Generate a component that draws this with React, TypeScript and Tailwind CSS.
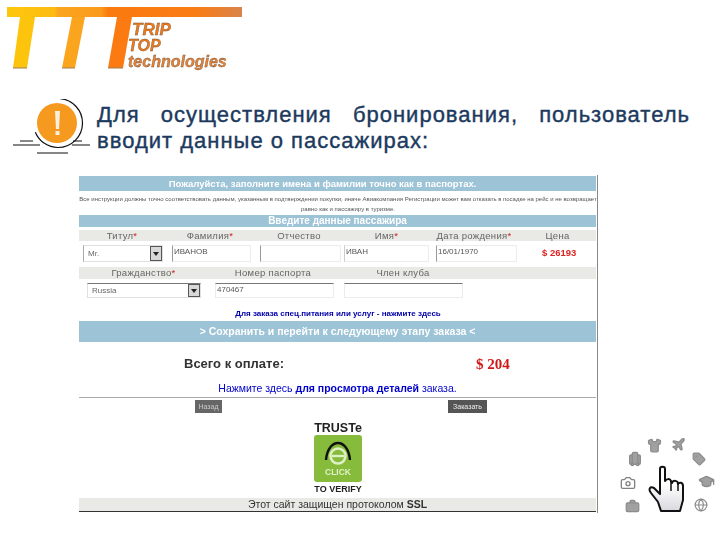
import { Briefcase, Camera, Globe, GraduationCap, Plane, Shirt, Tag, Luggage } from 'lucide-react'

const sans = 'font-["Liberation_Sans",Arial,sans-serif]'

function Logo() {
    return (
        <svg width="250" height="72" viewBox="0 0 250 72" className="block">
            <defs>
                <linearGradient id="bar" x1="0" x2="1" y1="0" y2="0">
                    <stop offset="0" stopColor="#fdc70c" />
                    <stop offset="0.2" stopColor="#fdbb12" />
                    <stop offset="0.22" stopColor="#fba51e" />
                    <stop offset="0.4" stopColor="#fb9a1c" />
                    <stop offset="0.43" stopColor="#fb7a10" />
                    <stop offset="0.8" stopColor="#f97c14" />
                    <stop offset="1" stopColor="#d9834a" />
                </linearGradient>
            </defs>
            <path d="M7 7H242V17H7Z" fill="url(#bar)" />
            <path d="M20 17H35L27 68H13Z" fill="#fdc40e" />
            <path d="M72 17H85L75 68H62Z" fill="#fba51e" />
            <path d="M117 17H132L123 68H108Z" fill="#fb7a12" />
            <path d="M13 68H27M62 68H75M108 68H123" stroke="#a08050" strokeWidth="1" />
            <g fontFamily="Liberation Sans, Arial, sans-serif" fontWeight="700" fontStyle="italic" stroke="#6e5038" strokeWidth="0.35">
                <text x="132" y="35" fontSize="17" fill="#ee7a1c">TRIP</text>
                <text x="128" y="51" fontSize="16" fill="#ee7a1c">TOP</text>
                <text x="128" y="67" fontSize="16" fill="#e58338">technologies</text>
            </g>
        </svg>
    )
}

function Alert() {
    return (
        <svg width="97" height="62" viewBox="0 0 97 62" className="block shrink-0">
            <circle cx="58" cy="24" r="24.5" fill="none" stroke="#111" strokeWidth="1.2" strokeDasharray="105 50" strokeDashoffset="38" />
            <circle cx="57" cy="24" r="20" fill="#f6991f" />
            <path d="M55 12H60L59 30H56Z" fill="#fbeeda" />
            <rect x="55.5" y="32" width="4" height="4" fill="#fbeeda" />
            <path d="M13 46H40M72 46H90M20 42H33M73 42H82M37 54H68" stroke="#111" strokeWidth="1.2" />
        </svg>
    )
}

function Bar({ className, children }: { className: string; children: string }) {
    return (
        <div className={`bg-[#9cc3d6] text-white font-bold text-center ${className}`}>{children}</div>
    )
}

function Field({ value, className }: { value?: string; className: string }) {
    return (
        <div className={`border border-[#ececec] px-px text-[8px] leading-[12px] text-[#555] bg-white ${className}`}>
            {value}
        </div>
    )
}

function Select({ value, className }: { value: string; className: string }) {
    return (
        <div className={`flex items-stretch border border-[#e0e0e0] bg-white text-[8px] text-[#666] ${className}`}>
            <span className="flex-1 pl-1 self-center">{value}</span>
            <span className="w-[12px] flex items-center justify-center bg-[#d8d8d8] border border-[#555] text-[#222]">
                <span className="border-x-[3px] border-x-transparent border-t-[4px] border-t-[#222]" />
            </span>
        </div>
    )
}

function Label({ children, req }: { children: string; req?: boolean }) {
    return (
        <div className="text-center text-[9.5px] leading-[11px] tracking-[0.3px] text-[#666]">
            {children}
            {req && <span className="text-[#c22]">*</span>}
        </div>
    )
}

function Order() {
    return (
        <div className={`ml-[79px] mt-[14px] w-[519px] h-[338px] flex flex-col bg-white border-r border-[#888] blur-[0.4px] ${sans}`}>
            <Bar className="h-[15px] mt-px mr-px pr-[30px] text-[9.5px] leading-[15px]">Пожалуйста, заполните имена и фамилии точно как в паспортах.</Bar>
            <div className="h-[24px] pt-[3px] text-center text-[6px] leading-[10px] text-[#555]">
                <p className="whitespace-nowrap">Все инструкции должны точно соответствовать данным, указанным в подтверждении покупки, иначе Авиакомпания Регистрации может вам отказать в посадке на рейс и не возвращает</p>
                <p className="pl-[20px]">равно как и пассажиру в туризме.</p>
            </div>
            <Bar className="h-[12px] mr-px text-[10px] leading-[12px]">Введите данные пассажира</Bar>

            <div className="mt-[3px] mr-px h-[11px] bg-[#e9e9e5] grid grid-cols-[86px_90px_88px_87px_88px_79px]">
                <Label req>Титул</Label>
                <Label req>Фамилия</Label>
                <Label>Отчество</Label>
                <Label req>Имя</Label>
                <Label req>Дата рождения</Label>
                <Label>Цена</Label>
            </div>
            <div className="mt-[4px] h-[17px] flex items-stretch">
                <Select value="Mr." className="ml-[4px] w-[80px] border-l-[#aaa]" />
                <Field value="ИВАНОВ" className="ml-[9px] w-[79px] border-l-[#999]" />
                <Field className="ml-[9px] w-[81px] border-l-[#999]" />
                <Field value="ИВАН" className="ml-[3px] w-[85px] border-l-[#ccc]" />
                <Field value="16/01/1970" className="ml-[7px] w-[81px] border-l-[#999]" />
                <span className="ml-[25px] self-center text-[9.5px] font-bold text-[#d22]">$ 26193</span>
            </div>

            <div className="mt-[5px] mr-px h-[12px] bg-[#e9e9e5] grid grid-cols-[129px_130px_130px]">
                <Label req>Гражданство</Label>
                <Label>Номер паспорта</Label>
                <Label>Член клуба</Label>
            </div>
            <div className="mt-[4px] h-[15px] flex items-stretch">
                <Select value="Russia" className="ml-[8px] w-[114px] border-t-[#777]" />
                <Field value="470467" className="ml-[14px] w-[119px] border-t-[#777]" />
                <Field className="ml-[10px] w-[119px] border-t-[#777]" />
            </div>

            <p className="mt-[11px] text-center text-[8px] leading-[10px] font-bold text-[#00a]">Для заказа спец.питания или услуг - нажмите здесь</p>
            <Bar className="mt-[2px] mr-px h-[21px] text-[10.5px] leading-[21px]">&gt; Сохранить и перейти к следующему этапу заказа &lt;</Bar>

            <div className="mt-[14px] h-[16px] flex items-center">
                <span className="ml-[105px] text-[13px] font-bold text-[#333]">Всего к оплате:</span>
                <span className={`ml-[192px] text-[15px] font-bold text-[#d01818] font-["Liberation_Serif",serif]`}>$ 204</span>
            </div>
            <p className="mt-[11px] pb-[3px] mr-px border-b border-[#aaa] text-center text-[10.5px] leading-[11px] text-[#00c]">
                Нажмите здесь <b>для просмотра деталей</b> заказа.
            </p>

            <div className="mt-[2px] h-[13px] flex items-stretch">
                <span className="ml-[116px] w-[27px] bg-[#666] text-[7px] leading-[13px] text-center text-[#ccc]">Назад</span>
                <span className="ml-[226px] w-[39px] bg-[#555] text-[7px] leading-[13px] text-center text-[#eee]">Заказать</span>
            </div>

            <div className="mt-[9px] flex flex-col items-center h-[76px]">
                <span className="text-[12.5px] leading-[12px] font-bold text-[#222]">TRUSTe</span>
                <div className="w-[48px] h-[47px] mt-px bg-[#86bb3c] rounded-[3px] flex flex-col items-center">
                    <svg width="30" height="30" viewBox="0 0 30 30" className="mt-[2px]">
                        <path d="M3 23C4 11 10 6 15 6s11 5 12 17" fill="none" stroke="#111" strokeWidth="2.4" />
                        <circle cx="15" cy="19" r="7.5" fill="none" stroke="#dff0c4" strokeWidth="2.6" />
                        <path d="M9 19H21" stroke="#dff0c4" strokeWidth="2.4" />
                    </svg>
                    <span className="text-[8.5px] leading-[10px] font-bold text-[#dff0c4]">CLICK</span>
                </div>
                <span className="mt-[2px] text-[9px] leading-[10px] font-bold text-[#222]">TO VERIFY</span>
            </div>

            <div className="mt-auto mb-px h-[14px] mr-px bg-[#e9e9e5] border-b border-[#333] text-center text-[10.5px] leading-[13px] text-[#333]">
                Этот сайт защищен протоколом <b>SSL</b>
            </div>
        </div>
    )
}

function Cursor() {
    const ic = 'absolute text-[#8c8c8c] fill-[#a0a0a0]'
    return (
        <div className="absolute left-[610px] top-[430px] w-[110px] h-[110px] blur-[0.3px]">
            <Shirt className={`${ic} w-[15px] h-[15px] left-[37px] top-[8px]`} />
            <Plane className={`${ic} w-[15px] h-[15px] left-[61px] top-[7px]`} />
            <Tag className={`${ic} w-[14px] h-[14px] left-[82px] top-[22px]`} />
            <GraduationCap className={`${ic} w-[17px] h-[17px] left-[88px] top-[43px]`} />
            <Globe className="absolute w-[14px] h-[14px] text-[#8c8c8c] left-[84px] top-[68px]" />
            <Briefcase className={`${ic} w-[15px] h-[15px] left-[15px] top-[69px]`} />
            <Camera className="absolute w-[16px] h-[16px] text-[#808080] left-[10px] top-[45px]" />
            <Luggage className={`${ic} w-[16px] h-[16px] left-[17px] top-[21px]`} />
            <svg width="52" height="50" viewBox="0 0 52 50" className="absolute left-[36px] top-[35px]">
                <defs>
                    <linearGradient id="hand" x1="0" x2="0" y1="0" y2="1">
                        <stop offset="0.4" stopColor="#fff" />
                        <stop offset="1" stopColor="#d8d8de" />
                    </linearGradient>
                </defs>
                <path
                    d="M14 4C14 1 19 1 19 4V16C20 14 24 13 25 16L26 18C27 15 32 15 32 19C33 17 37 17 37 21V35L34 46H15L12 37L5 28C2 24 4 21 8 23L14 29Z"
                    fill="url(#hand)"
                    stroke="#111"
                    strokeWidth="2"
                    strokeLinejoin="round"
                />
                <path d="M25 16V26M32 19V26" stroke="#111" strokeWidth="1.5" />
            </svg>
        </div>
    )
}

export default function App() {
    return (
        <div className={`relative w-[720px] h-[540px] overflow-hidden bg-white ${sans}`}>
            <div className="h-[72px] blur-[0.3px]">
                <Logo />
            </div>
            <div className="mt-[27px] flex items-start">
                <Alert />
                <p className="mt-[3px] w-[593px] text-[22px] leading-[26px] tracking-[1px] text-justify text-[#1c3a5e] [-webkit-text-stroke:0.4px_#1c3a5e]">
                    Для осуществления бронирования, пользователь вводит данные о пассажирах:
                </p>
            </div>
            <Order />
            <Cursor />
        </div>
    )
}
